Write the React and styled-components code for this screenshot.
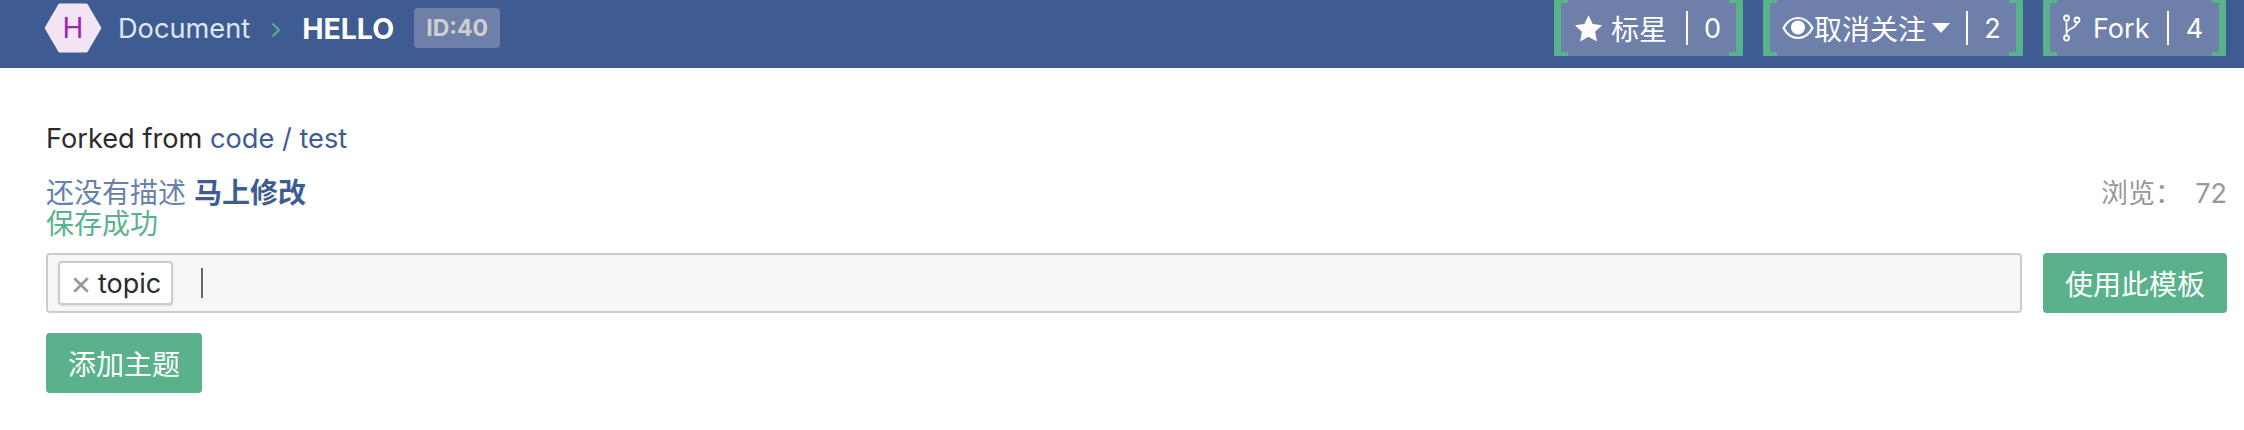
import React from "react";
import styled, { createGlobalStyle } from "styled-components";

const Global = createGlobalStyle`
  html, body { margin: 0; padding: 0; background: #fff; }
  body { font-family: Inter, "Noto Sans CJK SC", sans-serif; font-size: 27px; color: #2b2b2b; }
`;
const Page = styled.div`width: 2244px; height: 430px; overflow: hidden;`;
const Header = styled.header`
  height: 68px; background: #3e5c91; display: flex; align-items: flex-start; justify-content: space-between;
  padding: 0 18px 0 44px; box-sizing: border-box;
`;
const Crumbs = styled.div`display: flex; align-items: center; height: 56px;`;
const Hex = styled.svg`width: 58px; height: 50px; flex: none; margin-right: 16px;`;
const Owner = styled.span`font-size: 27.2px; color: #dfe7f5;`;
const Sep = styled.svg`width: 10px; height: 16px; margin: 4px 21px 0 21px;`;
const Repo = styled.strong`font-size: 28.5px; font-weight: 700; color: #fff;`;
const IdTag = styled.span`
  margin-left: 20px; width: 86px; height: 40px; border-radius: 4px; background: #6e80aa; color: #cfcfcf;
  font-size: 23px; font-weight: 700; display: flex; align-items: center; justify-content: center;
`;
const Actions = styled.div`display: flex; gap: 20px;`;
const Action = styled.div`
  position: relative; height: 56px; width: ${p => p.$w}px; background: #6e80aa; box-sizing: border-box;
  color: #fff; display: flex; align-items: center; padding-left: ${p => p.$pl}px; font-size: 28px;
  border-radius: 2px;
  &::before, &::after {
    content: ""; position: absolute; top: 0; bottom: 0; width: 14px; box-sizing: border-box;
    border: 0 solid #5ab28b; border-top-width: 3px; border-bottom-width: 4px;
  }
  &::before { left: 0; border-left-width: 7px; border-radius: 2px 0 0 2px; }
  &::after { right: 0; border-right-width: 7px; border-radius: 0 2px 2px 0; }
`;
const ActionLabel = styled.span`display: inline-flex; align-items: center; width: ${p => p.$w}px; flex: none;`;
const ForkText = styled.span`font-size: 27px;`;
const Count = styled.span`
  flex: 1; height: 34px; border-left: 2px solid #fff; display: flex; align-items: center; justify-content: center;
  padding-right: 6px; font-size: 27px;
`;
const Main = styled.main`padding: 55px 17px 0 46px;`;
const Fork = styled.div`font-size: 27.2px; line-height: 32px;`;
const ForkLink = styled.a`color: #3e5c91;`;
const DescRow = styled.div`display: flex; justify-content: space-between; margin-top: 23px;`;
const Desc = styled.div`font-size: 28px; line-height: 31px;`;
const Muted = styled.span`color: #6681ad;`;
const Edit = styled.strong`color: #3e5c91; font-weight: 700;`;
const Saved = styled.div`color: #5ab28b;`;
const Views = styled.div`font-size: 27px; line-height: 31px; color: #999; white-space: pre; word-spacing: -1px;`;
const TopicRow = styled.div`display: flex; justify-content: space-between; margin-top: 13px;`;
const TopicBox = styled.div`
  width: 1976px; height: 60px; box-sizing: border-box; border: 2px solid #ccc; border-radius: 4px; background: #f6f7f9;
  display: flex; align-items: center; padding-left: 10px;
`;
const Chip = styled.span`
  height: 44px; width: 115px; box-sizing: border-box; background: #fff; border: 2px solid #ccc; border-radius: 4px;
  box-shadow: 0 1px 2px rgba(0,0,0,.12); display: flex; align-items: center; padding-left: 12px; gap: 8px; font-size: 27px;
`;
const ChipX = styled.svg`width: 18px; height: 18px; margin-top: 3px;`;
const Caret = styled.span`width: 2px; height: 30px; background: #666; margin-left: 28px;`;
const GreenButton = styled.button`
  height: 60px; width: ${p => p.$w}px; border: 0; border-radius: 4px; background: #5ab28b; color: #fff;
  font: inherit; font-size: 28px; padding: 0;
`;
const AddRow = styled.div`margin-top: 20px;`;
const Icon = styled.svg`flex: none; margin-right: ${p => p.$mr || 0}px;`;

export default function App() {
  return (
    <Page>
      <Global />
      <Header>
        <Crumbs>
          <Hex viewBox="0 0 58 50">
            <polygon points="1,25 15,1 43,1 57,25 43,49 15,49" fill="#f3e5f5" stroke="#f3e5f5" strokeLinejoin="round" />
            <text x="29" y="35" textAnchor="middle" fontSize="28" fill="#9c27b0" fontFamily="Inter, sans-serif">H</text>
          </Hex>
          <Owner>Document</Owner>
          <Sep viewBox="0 0 10 16"><path d="M1.5 1.5 8 8l-6.5 6.5" fill="none" stroke="#5ab28b" strokeWidth="2" /></Sep>
          <Repo>HELLO</Repo>
          <IdTag>ID:40</IdTag>
        </Crumbs>
        <Actions>
          <Action $w={189} $pl={19}>
            <ActionLabel $w={113}>
              <Icon width="31" height="31" viewBox="0 0 24 24" $mr={7}><path fill="#fff" d="M12 1.8l3.2 6.8 7.3.9-5.4 5.1 1.4 7.4L12 18.4 5.5 22l1.4-7.4L1.500 9.500l7.3-.9z" /></Icon>
              标星
            </ActionLabel>
            <Count>0</Count>
          </Action>
          <Action $w={260} $pl={19}>
            <ActionLabel $w={184}>
              <Icon width="32" height="26" viewBox="0 0 32 26"><path fill="none" stroke="#fff" strokeWidth="2.200" d="M1.500 13C5 6.500 10 3 16 3s11 3.500 14.500 10C27 19.500 22 23 16 23S5 19.500 1.500 13z" /><circle cx="16" cy="12.500" r="7" fill="#fff" /></Icon>
              取消关注
              <Icon width="18" height="10" viewBox="0 0 18 10" style={{ marginLeft: 6 }}><path fill="#fff" d="M0 0h18L9 10z" /></Icon>
            </ActionLabel>
            <Count>2</Count>
          </Action>
          <Action $w={183} $pl={19}>
            <ActionLabel $w={105}>
              <Icon width="18" height="30" viewBox="0 0 18 30" $mr={12} style={{ marginLeft: 1 }}>
                <g fill="none" stroke="#fff" strokeWidth="1.800"><circle cx="3.500" cy="5" r="2.500" /><circle cx="14" cy="7" r="2.500" /><circle cx="3.500" cy="25" r="2.500" /><path d="M3.500 7.500v15M14 9.500c0 6-10.500 6-10.500 11" /></g>
              </Icon>
              <ForkText>Fork</ForkText>
            </ActionLabel>
            <Count>4</Count>
          </Action>
        </Actions>
      </Header>
      <Main>
        <Fork>Forked from <ForkLink>code / test</ForkLink></Fork>
        <DescRow>
          <Desc>
            <Muted>还没有描述 </Muted><Edit>马上修改</Edit>
            <Saved>保存成功</Saved>
          </Desc>
          <Views>浏览：  72</Views>
        </DescRow>
        <TopicRow>
          <TopicBox>
            <Chip>
              <ChipX viewBox="0 0 16 16"><path d="M2 2l12 12M14 2L2 14" stroke="#9a9a9a" strokeWidth="2.500" /></ChipX>
              topic
            </Chip>
            <Caret />
          </TopicBox>
          <GreenButton $w={184}>使用此模板</GreenButton>
        </TopicRow>
        <AddRow><GreenButton $w={156}>添加主题</GreenButton></AddRow>
      </Main>
    </Page>
  );
}
